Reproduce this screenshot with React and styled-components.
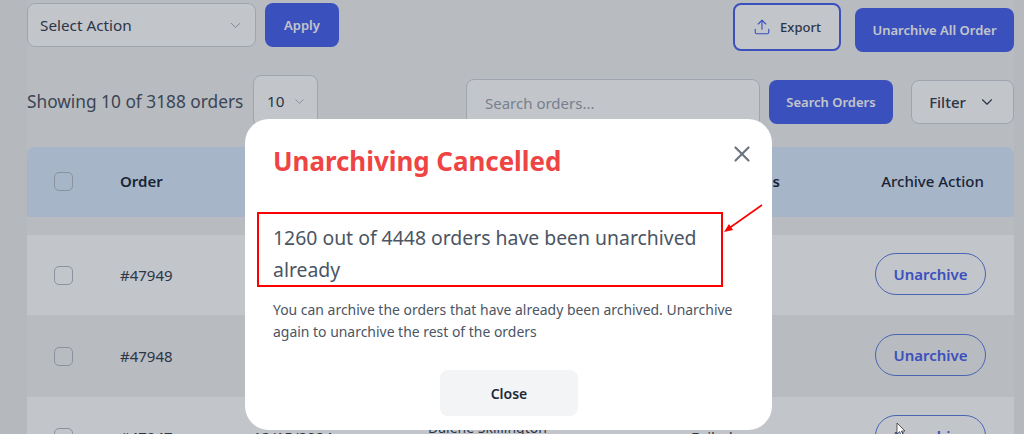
import React from "react";
import styled, { createGlobalStyle } from "styled-components";
import { ChevronDown, Upload, X } from "lucide-react";

const GlobalStyle = createGlobalStyle`
  html, body {
    margin: 0;
    padding: 0;
    background: #eeeeee;
    font-family: "Noto Sans", "Open Sans", sans-serif;
  }
  * {
    box-sizing: border-box;
  }
`;

const Page = styled.div`
  position: relative;
  width: 1024px;
  height: 434px;
  overflow: hidden;
  background: #eeeeee;
`;

const Content = styled.main`
  width: 987px;
  height: 100%;
  margin-left: 27px;
  padding-top: 3px;
  background: #f2f2f2;
`;

const Toolbar = styled.div`
  display: flex;
  align-items: flex-start;
  height: 49px;
`;

const Spacer = styled.div`
  flex: 1;
`;

const SelectBox = styled.div`
  display: flex;
  align-items: center;
  justify-content: space-between;
  width: ${(p) => p.$width}px;
  height: ${(p) => p.$height}px;
  padding: 0 ${(p) => p.$padRight}px 0 ${(p) => p.$padLeft}px;
  background: #fff;
  border: 1px solid #d1d5db;
  border-radius: 8px;
  font-size: 15.3px;
  color: #374151;
  svg {
    color: #9ca3af;
  }
`;

const Solid = styled.button`
  height: 44px;
  width: ${(p) => p.$width}px;
  margin: ${(p) => p.$margin || "0"};
  padding: 0;
  border: none;
  border-radius: 8px;
  background: #4a63ee;
  color: #fff;
  font-family: inherit;
  font-size: 13px;
  font-weight: 600;
`;

const ExportButton = styled.button`
  display: flex;
  align-items: center;
  justify-content: center;
  gap: 9px;
  width: 108px;
  height: 48px;
  margin-right: 14px;
  padding-top: 1px;
  background: #fff;
  border: 2px solid #4a63ee;
  border-radius: 8px;
  color: #374151;
  font-family: inherit;
  font-size: 13px;
  font-weight: 500;
  svg {
    color: #4a63ee;
  }
`;

const FilterRow = styled.div`
  display: flex;
  align-items: flex-start;
  height: 72px;
  margin-top: 23px;
`;

const Showing = styled.span`
  width: 226px;
  margin-top: 15px;
  font-size: 17.3px;
  line-height: 24px;
  white-space: nowrap;
  color: #4b5563;
`;

const SearchInput = styled.div`
  display: flex;
  align-items: center;
  width: 294px;
  height: 48px;
  margin: 4px 9px 0 148px;
  padding-left: 18px;
  background: #fff;
  border: 1px solid #d1d5db;
  border-radius: 8px;
  font-size: 15px;
  color: #9ca3af;
`;

const FilterButton = styled.button`
  display: flex;
  align-items: center;
  justify-content: center;
  gap: 12px;
  width: 103px;
  height: 44px;
  margin: 5px 0 0 18px;
  background: #fff;
  border: 1px solid #d1d5db;
  border-radius: 8px;
  color: #374151;
  font-family: inherit;
  font-size: 15px;
  font-weight: 500;
`;

const HeadRow = styled.div`
  display: grid;
  grid-template-columns: 93px 500px 160px 71px 163px;
  align-items: center;
  height: 70px;
  margin-bottom: 18px;
  padding-bottom: 2px;
  background: #dbeafe;
  border-radius: 8px 8px 0 0;
  font-size: 15px;
  font-weight: 600;
  color: #1f2937;
`;

const HeadCell = styled.span`
  grid-column: ${(p) => p.$col};
  text-align: ${(p) => p.$align || "left"};
  font-weight: ${(p) => p.$weight || 600};
  white-space: nowrap;
`;

const Row = styled.div`
  display: grid;
  grid-template-columns: 93px 133px 175px 263px 160px 163px;
  align-items: center;
  height: ${(p) => p.$height}px;
  background: ${(p) => (p.$light ? "#fff" : "transparent")};
  font-size: 15px;
  color: #374151;
`;

const Check = styled.span`
  justify-self: start;
  width: 19px;
  height: 19px;
  margin-left: 27px;
  background: transparent;
  border: 1px solid #b6bbc4;
  border-radius: 5px;
`;

const Customer = styled.span`
  margin-bottom: 20px;
  font-size: 14px;
  white-space: nowrap;
`;

const PillButton = styled.button`
  justify-self: center;
  width: 111px;
  height: 42px;
  margin: 0 4px 2px 0;
  padding: 0;
  background: transparent;
  border: 1px solid #5f7fe0;
  border-radius: 21px;
  color: #4a63ee;
  font-family: inherit;
  font-size: 15px;
  font-weight: 600;
`;

const Overlay = styled.div`
  position: absolute;
  inset: 0;
  background: rgba(11, 23, 43, 0.25);
`;

const Modal = styled.section`
  position: absolute;
  left: 245px;
  top: 119px;
  width: 527px;
  height: 311px;
  padding: 24px 28px 0;
  background: #fff;
  border-radius: 24px;
`;

const ModalHead = styled.div`
  display: flex;
  align-items: flex-start;
  justify-content: space-between;
  height: 69px;
`;

const Title = styled.h2`
  margin: -1px 0 0;
  font-size: 25.9px;
  line-height: 38px;
  font-weight: 700;
  white-space: nowrap;
  color: #ef4444;
`;

const CloseIcon = styled.span`
  display: flex;
  margin: -2px -11px 0 0;
  color: #6b7280;
`;

const Callout = styled.div`
  width: 466px;
  height: 75px;
  margin-left: -16px;
  padding: 8px 16px 0 14px;
  border: 2px solid #f00;
  font-size: 19.4px;
  line-height: 32px;
  color: #4b5563;
`;

const Note = styled.p`
  margin: 12px 0 0;
  font-size: 13.95px;
  line-height: 22px;
  color: #4b5563;
`;

const CloseRow = styled.div`
  display: flex;
  justify-content: center;
  margin-top: 27px;
`;

const CloseButton = styled.button`
  width: 138px;
  height: 46px;
  margin-left: 1px;
  background: #f3f4f6;
  border: none;
  border-radius: 8px;
  color: #1f2937;
  font-family: inherit;
  font-size: 14px;
  font-weight: 600;
`;

const ArrowMark = styled.svg`
  position: absolute;
  left: 475px;
  top: 82px;
`;

const Cursor = styled.svg`
  position: absolute;
  left: 896px;
  top: 422px;
`;

export default function App() {
  return (
    <Page>
      <GlobalStyle />
      <Content>
        <Toolbar>
          <SelectBox $width={229} $height={44} $padLeft={12} $padRight={11}>
            Select Action
            <ChevronDown size={17} strokeWidth={1.25} />
          </SelectBox>
          <Solid $width={74} $margin="0 0 0 9px">Apply</Solid>
          <Spacer />
          <ExportButton>
            <Upload size={18} strokeWidth={1.5} />
            Export
          </ExportButton>
          <Solid $width={159} $margin="5px 0 0">Unarchive All Order</Solid>
        </Toolbar>
        <FilterRow>
          <Showing>Showing 10 of 3188 orders</Showing>
          <SelectBox $width={65} $height={52} $padLeft={13} $padRight={10}>
            10
            <ChevronDown size={15} strokeWidth={1.25} />
          </SelectBox>
          <SearchInput>Search orders...</SearchInput>
          <Solid $width={124} $margin="5px 0 0">Search Orders</Solid>
          <FilterButton>
            Filter
            <ChevronDown size={18} strokeWidth={1.5} />
          </FilterButton>
        </FilterRow>
        <HeadRow>
          <Check />
          <HeadCell $col="2">Order</HeadCell>
          <HeadCell $col="3" $align="right">Archive Status</HeadCell>
          <HeadCell $col="5" $align="center" $weight={500}>Archive Action</HeadCell>
        </HeadRow>
        <Row $light $height={80}>
          <Check />
          <span>#47949</span>
          <span />
          <span />
          <span />
          <PillButton>Unarchive</PillButton>
        </Row>
        <Row $height={82}>
          <Check />
          <span>#47948</span>
          <span />
          <span />
          <span />
          <PillButton>Unarchive</PillButton>
        </Row>
        <Row $light $height={80}>
          <Check />
          <span>#47947</span>
          <span>12/15/2024</span>
          <Customer>Dalene Skillington</Customer>
          <span>Failed</span>
          <PillButton>Unarchive</PillButton>
        </Row>
      </Content>
      <Overlay />
      <Modal>
        <ModalHead>
          <Title>Unarchiving Cancelled</Title>
          <CloseIcon>
            <X size={26} strokeWidth={2} />
          </CloseIcon>
        </ModalHead>
        <Callout>1260 out of 4448 orders have been unarchived already</Callout>
        <Note>
          You can archive the orders that have already been archived. Unarchive again to unarchive the rest of the orders
        </Note>
        <CloseRow>
          <CloseButton>Close</CloseButton>
        </CloseRow>
        <ArrowMark width="46" height="34" viewBox="0 0 46 34">
          <path d="M42 4 L8 28" stroke="#f00" strokeWidth="1.6" fill="none" />
          <path d="M4 31 L9 23 L13 29 Z" fill="#f00" />
        </ArrowMark>
      </Modal>
      <Cursor width="11" height="15" viewBox="0 0 11 15">
        <path d="M1 1 L1 12 L3.6 9.6 L5.4 13.8 L7.2 13 L5.4 9 L9 9 Z" fill="#fff" stroke="#333" strokeWidth="0.8" />
      </Cursor>
    </Page>
  );
}
